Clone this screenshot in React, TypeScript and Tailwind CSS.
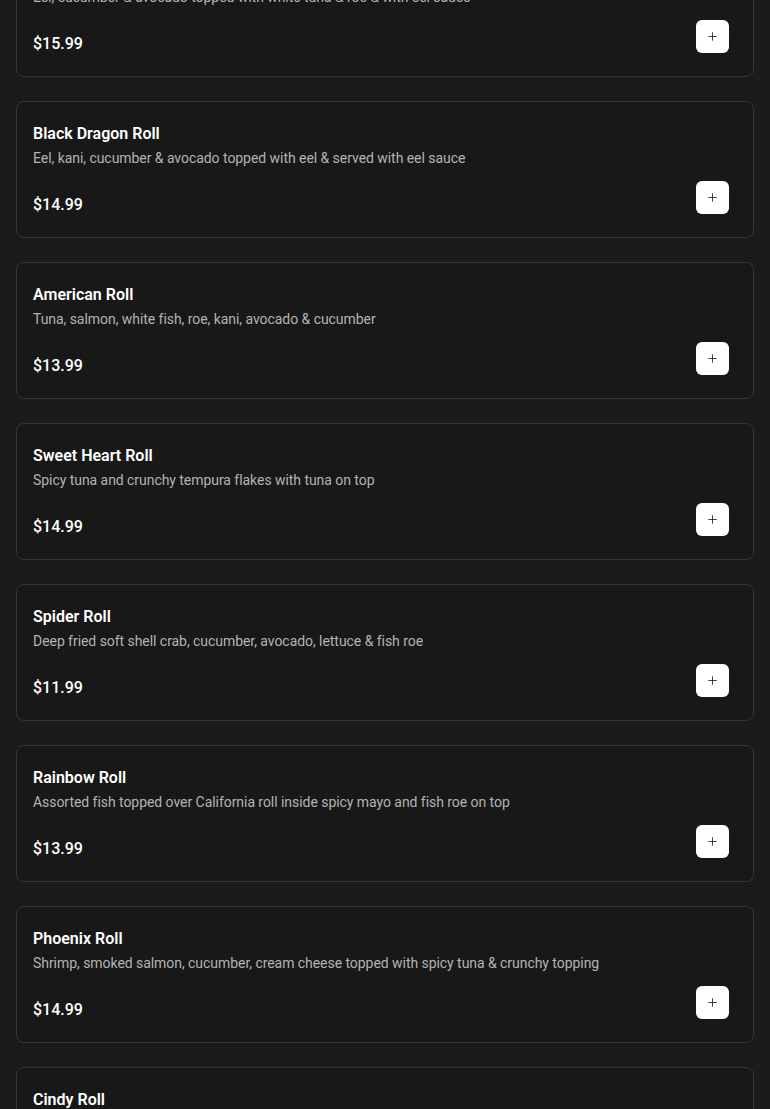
import { Plus } from 'lucide-react';

interface MenuItem {
  name: string;
  description: string;
  price: string;
}

const items: MenuItem[] = [
  {
    name: 'White Dragon Roll',
    description: 'Eel, cucumber & avocado topped with white tuna & roe & with eel sauce',
    price: '$15.99',
  },
  {
    name: 'Black Dragon Roll',
    description: 'Eel, kani, cucumber & avocado topped with eel & served with eel sauce',
    price: '$14.99',
  },
  {
    name: 'American Roll',
    description: 'Tuna, salmon, white fish, roe, kani, avocado & cucumber',
    price: '$13.99',
  },
  {
    name: 'Sweet Heart Roll',
    description: 'Spicy tuna and crunchy tempura flakes with tuna on top',
    price: '$14.99',
  },
  {
    name: 'Spider Roll',
    description: 'Deep fried soft shell crab, cucumber, avocado, lettuce & fish roe',
    price: '$11.99',
  },
  {
    name: 'Rainbow Roll',
    description: 'Assorted fish topped over California roll inside spicy mayo and fish roe on top',
    price: '$13.99',
  },
  {
    name: 'Phoenix Roll',
    description: 'Shrimp, smoked salmon, cucumber, cream cheese topped with spicy tuna & crunchy topping',
    price: '$14.99',
  },
  {
    name: 'Cindy Roll',
    description: 'Spicy salmon, avocado & cucumber topped with salmon & spicy mayo',
    price: '$14.99',
  },
];

function MenuCard({ item }: { item: MenuItem }) {
  return (
    <div className="border border-[#363636] bg-[#181818] rounded-lg pl-4 pr-6 pt-5 pb-5">
      <h3 className="text-base leading-6 font-semibold text-white">{item.name}</h3>
      <p className="mt-0.5 text-sm leading-5 tracking-[-0.05px] text-[#b3b3b3]">{item.description}</p>
      {/* button sits a bit higher than the price line, so the row keeps the text height */}
      <div className="mt-[25px] flex h-6 items-end justify-between">
        <span className="text-base leading-6 font-medium text-white">{item.price}</span>
        <button
          type="button"
          className="mb-[3px] flex h-[33px] w-[33px] shrink-0 items-center justify-center rounded-md bg-white text-[#222]"
        >
          <Plus size={13} strokeWidth={1.6} />
        </button>
      </div>
    </div>
  );
}

export default function App() {
  return (
    <div
      className="h-[1109px] overflow-hidden bg-[#1b1b1b] px-4"
      style={{ fontFamily: 'Roboto, "Liberation Sans", sans-serif' }}
    >
      <div className="-mt-[60px] flex flex-col gap-6">
        {items.map((item) => (
          <MenuCard key={item.name} item={item} />
        ))}
      </div>
    </div>
  );
}
